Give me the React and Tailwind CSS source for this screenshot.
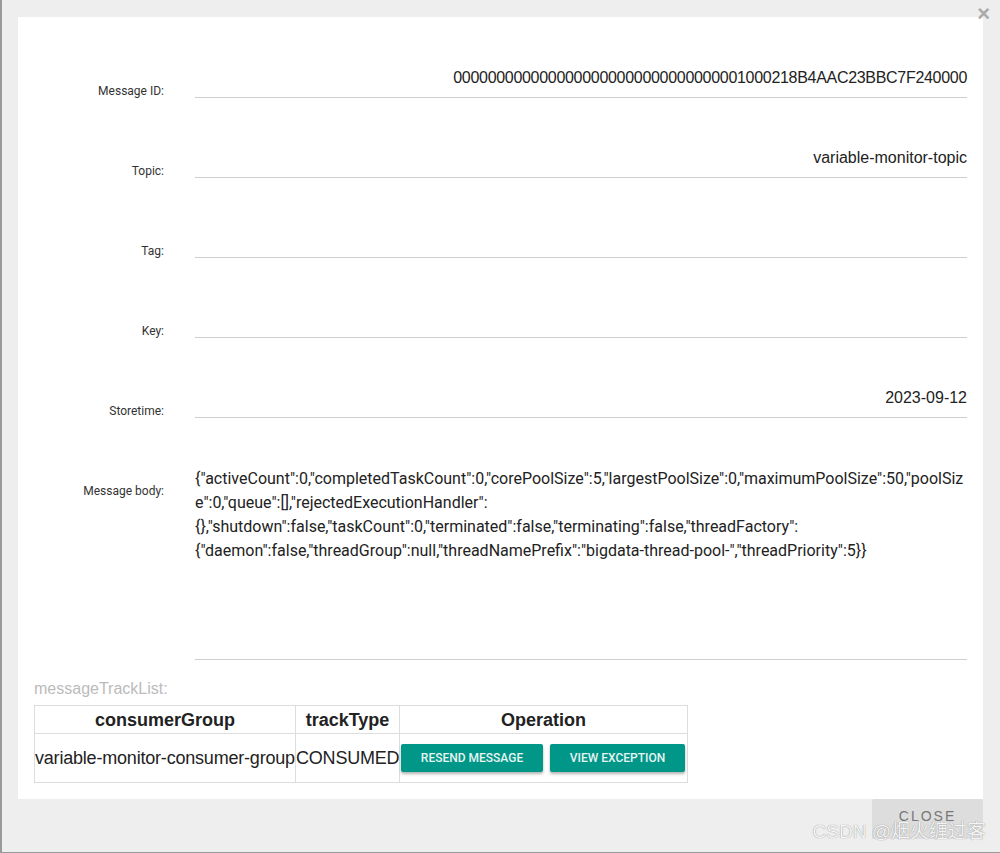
import React from "react";

const rows = [
  { label: "Message ID:", value: "0000000000000000000000000000000001000218B4AAC23BBC7F240000", tight: true },
  { label: "Topic:", value: "variable-monitor-topic" },
  { label: "Tag:", value: "" },
  { label: "Key:", value: "" },
  { label: "Storetime:", value: "2023-09-12" },
];

const bodyLines = [
  '{"activeCount":0,"completedTaskCount":0,"corePoolSize":5,"largestPoolSize":0,"maximumPoolSize":50,"poolSiz',
  'e":0,"queue":[],"rejectedExecutionHandler":',
  '{},"shutdown":false,"taskCount":0,"terminated":false,"terminating":false,"threadFactory":',
  '{"daemon":false,"threadGroup":null,"threadNamePrefix":"bigdata-thread-pool-","threadPriority":5}}',
];

export default function App() {
  return (
    <div className="relative w-[1000px] h-[853px] bg-[#eeeeee] border-l-2 border-b border-[#9a9a9a] overflow-hidden font-['Liberation_Sans',Arial,sans-serif]">
      <div className="pt-[17px] pl-[16px]">
        <div className="w-[965px] h-[782px] bg-white flex flex-col pt-[1px]">
          {rows.map((r) => (
            <div key={r.label} className="flex items-end h-[80px]">
              <div className="w-[146px] text-right text-[12px] leading-[14px] text-[#333] font-['Roboto',sans-serif]">
                {r.label}
              </div>
              <div
                className={
                  r.tight
                    ? "ml-[31px] w-[772px] border-b border-[#cfcfcf] text-right text-[16px] leading-[20px] text-[#222] pb-[8px] h-[30px] tracking-[-0.3px]"
                    : "ml-[31px] w-[772px] border-b border-[#cfcfcf] text-right text-[16px] leading-[20px] text-[#222] pb-[8px] h-[30px]"
                }
              >
                {r.value}
              </div>
            </div>
          ))}
          <div className="flex items-start h-[242px]">
            <div className="w-[146px] text-right text-[12px] leading-[14px] text-[#333] mt-[66px] font-['Roboto',sans-serif]">
              Message body:
            </div>
            <div className="ml-[31px] w-[772px] h-full border-b border-[#cfcfcf] pt-[49px] font-['Roboto',sans-serif] text-[16px] leading-[24px] text-[#222] whitespace-pre">
              {bodyLines.map((l, i) => (
                <div key={i}>{l}</div>
              ))}
            </div>
          </div>
          <div className="pl-[16px] mt-[20px] text-[16px] leading-[18px] text-[#bbbbbb]">messageTrackList:</div>
          <table className="self-start table-fixed w-[653px] ml-[16px] mt-[7px] border-collapse border border-[#dddddd] text-[#222]">
            <colgroup>
              <col className="w-[261px]" />
              <col className="w-[104px]" />
              <col className="w-[288px]" />
            </colgroup>
            <thead>
              <tr className="h-[28px]">
                <th className="border border-[#dddddd] text-[18px] leading-[22px] font-bold p-0">consumerGroup</th>
                <th className="border border-[#dddddd] text-[18px] leading-[22px] font-bold p-0">trackType</th>
                <th className="border border-[#dddddd] text-[18px] leading-[22px] font-bold p-0">Operation</th>
              </tr>
            </thead>
            <tbody>
              <tr className="h-[49px]">
                <td className="border border-[#dddddd] text-[18px] p-0 whitespace-nowrap overflow-visible tracking-[-0.2px]">variable-monitor-consumer-group</td>
                <td className="border border-[#dddddd] text-[18px] p-0 whitespace-nowrap overflow-visible tracking-[-0.2px]">CONSUMED</td>
                <td className="border border-[#dddddd] p-0">
                  <div className="flex items-center gap-[7px] pl-[1px]">
                    <button className="w-[142px] h-[28px] rounded-[2px] bg-[#009688] text-[#e6f4f2] text-[12px] font-medium font-['Roboto',sans-serif] shadow-[0_2px_3px_rgba(0,0,0,0.3)]">
                      RESEND MESSAGE
                    </button>
                    <button className="w-[135px] h-[28px] rounded-[2px] bg-[#009688] text-[#e6f4f2] text-[12px] font-medium font-['Roboto',sans-serif] shadow-[0_2px_3px_rgba(0,0,0,0.3)]">
                      VIEW EXCEPTION
                    </button>
                  </div>
                </td>
              </tr>
            </tbody>
          </table>
        </div>
        <div className="flex justify-end pr-[17px]">
          <div className="w-[111px] h-[40px] bg-[#dddddd] rounded-t-[2px] text-center pt-[7px] text-[14px] tracking-[2px] text-[#777777]">
            CLOSE
          </div>
        </div>
      </div>
      <div className="absolute right-[10px] top-[3px] text-[#aaaaaa] text-[22px] font-bold leading-[22px]">×</div>
      <div className="absolute right-[14px] top-[820px] text-[19px] leading-[24px] text-[#f4f4f4] font-['Liberation_Sans','Noto_Sans_CJK_SC',sans-serif] [text-shadow:0_0_1px_#777]">
        CSDN @烟火缠过客
      </div>
    </div>
  );
}
